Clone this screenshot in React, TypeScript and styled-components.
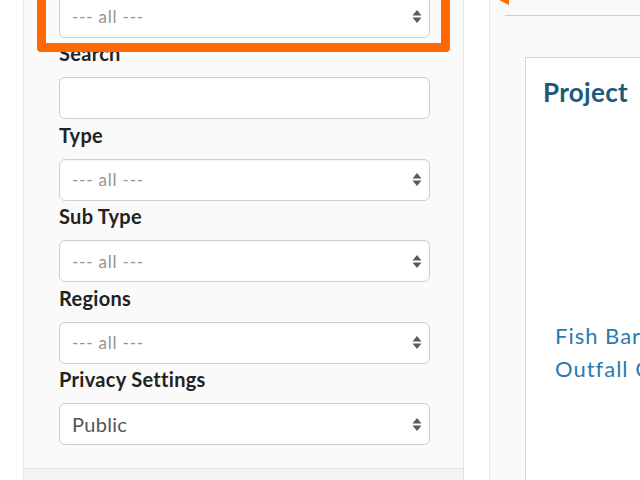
import React from "react";
import styled, { createGlobalStyle } from "styled-components";

const Global = createGlobalStyle`
  html, body { margin: 0; padding: 0; background: #fff; }
  body { font-family: Lato, "Open Sans", "Liberation Sans", sans-serif; }
  * { box-sizing: border-box; }
`;

const Page = styled.div`
  display: flex;
  width: 640px;
  height: 480px;
  overflow: hidden;
  background: #fff;
`;

const Gutter = styled.div<{ $w: number }>`
  flex: 0 0 ${(p) => p.$w}px;
  background: #fff;
`;

const FilterPanel = styled.aside`
  flex: 0 0 441px;
  display: flex;
  flex-direction: column;
  background: #fafafa;
  border-left: 1px solid #e8e8e8;
  border-right: 1px solid #e4e4e4;
`;

const PanelBody = styled.div`
  display: flex;
  flex-direction: column;
  margin-top: -4.5px;
  padding: 0 33px 22.5px 35px;
`;

const PanelFooter = styled.div`
  flex: 1;
  background: #f3f3f3;
  border-top: 1px solid #e2e2e2;
`;

const Highlighted = styled.div`
  position: relative;
`;

const HighlightBox = styled.div`
  position: absolute;
  left: -22px;
  right: -20px;
  top: -40px;
  bottom: -14.5px;
  border: 9px solid #ff6700;
  border-radius: 4px;
  z-index: 2;
  pointer-events: none;
`;

const Label = styled.div`
  height: 26px;
  line-height: 26px;
  margin: 2.5px 0 11px;
  font-size: 20px;
  letter-spacing: 0.3px;
  font-weight: 700;
  color: #222;
  white-space: nowrap;
`;

const Control = styled.div<{ $muted?: boolean }>`
  height: 42px;
  display: flex;
  align-items: center;
  justify-content: space-between;
  padding: 0 7px 0 12px;
  background: #fff;
  border: 1px solid #cfcfcf;
  border-radius: 6px;
  box-shadow: inset 0 1px 1px rgba(0, 0, 0, 0.04);
  font-size: ${(p) => (p.$muted ? "17px" : "20px")};
  letter-spacing: ${(p) => (p.$muted ? "0.8px" : "0.3px")};
  color: ${(p) => (p.$muted ? "#949494" : "#555")};
  white-space: nowrap;
`;

const ContentPanel = styled.main`
  position: relative;
  flex: 1;
  display: flex;
  flex-direction: column;
  background: #fafafa;
  border-left: 1px solid #e8e8e8;
  padding-left: 15px;
`;

const Rule = styled.div`
  margin-top: 15px;
  height: 1px;
  background: #cfcfcf;
`;

const ArrowTip = styled.svg`
  position: absolute;
  left: 9px;
  top: 0;
`;

const Card = styled.section`
  margin: 41px 0 0 20px;
  flex: 1;
  background: #fff;
  border: 1px solid #c8dae5;
  border-right: none;
  border-bottom: none;
  padding: 19px 0 0 17px;
  overflow: hidden;
`;

const CardTitle = styled.h2`
  margin: 0;
  font-size: 26px;
  line-height: 30px;
  letter-spacing: 0.3px;
  font-weight: 700;
  color: #1c5a7d;
  white-space: nowrap;
`;

const ProjectLink = styled.div`
  margin: 212px 0 0 12px;
  font-size: 22px;
  line-height: 33px;
  letter-spacing: 1px;
  color: #2a7bb0;
  white-space: nowrap;
`;

const Arrows = () => (
  <svg width="10" height="15" viewBox="0 0 10 15">
    <polygon points="5,1 9.5,6.5 0.5,6.5" fill="#5a5a5a" />
    <polygon points="0.5,8.5 9.5,8.5 5,14" fill="#5a5a5a" />
  </svg>
);

const Select = ({ value, muted }: { value: string; muted?: boolean }) => (
  <Control $muted={muted}>
    <span>{value}</span>
    <Arrows />
  </Control>
);

const filters = [
  { label: "Type", value: "--- all ---", muted: true },
  { label: "Sub Type", value: "--- all ---", muted: true },
  { label: "Regions", value: "--- all ---", muted: true },
  { label: "Privacy Settings", value: "Public", muted: false },
];

export default function App() {
  return (
    <>
      <Global />
      <Page>
        <Gutter $w={23} />
        <FilterPanel>
          <PanelBody>
            <Highlighted>
              <Select value="--- all ---" muted />
              <HighlightBox />
            </Highlighted>
            <Label>Search</Label>
            <Control />
            {filters.map((f) => (
              <React.Fragment key={f.label}>
                <Label>{f.label}</Label>
                <Select value={f.value} muted={f.muted} />
              </React.Fragment>
            ))}
          </PanelBody>
          <PanelFooter />
        </FilterPanel>
        <Gutter $w={25} />
        <ContentPanel>
          <ArrowTip width="10" height="6" viewBox="0 0 10 6">
            <polygon points="0,0 10,0 10,5" fill="#ff6700" />
          </ArrowTip>
          <Rule />
          <Card>
            <CardTitle>Project</CardTitle>
            <ProjectLink>
              Fish Barrier Removal
              <br />
              Outfall Creek
            </ProjectLink>
          </Card>
        </ContentPanel>
      </Page>
    </>
  );
}
